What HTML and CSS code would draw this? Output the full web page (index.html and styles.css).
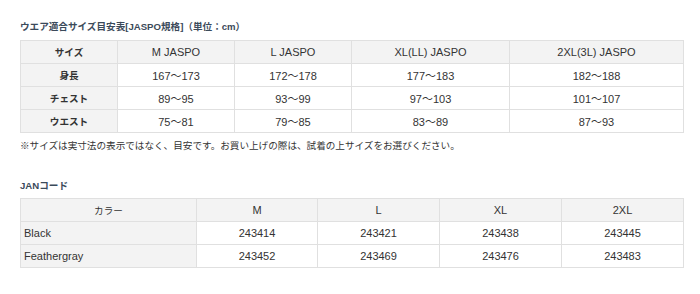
FILE: index.html
```html
<!DOCTYPE html>
<html lang="ja">
<head>
<meta charset="utf-8">
<link rel="stylesheet" href="styles.css">
</head>
<body>
<div class="wrap">
  <h2 class="title">ウエア適合サイズ目安表[JASPO規格]（単位：cm）</h2>
  <table class="tbl size">
    <colgroup>
      <col style="width:97px"><col style="width:117px"><col style="width:117px"><col style="width:158px"><col style="width:174px">
    </colgroup>
    <tr><th class="ja bold">サイズ</th><th>M JASPO</th><th>L JASPO</th><th>XL(LL) JASPO</th><th>2XL(3L) JASPO</th></tr>
    <tr><th class="ja bold">身長</th><td>167～173</td><td>172～178</td><td>177～183</td><td>182～188</td></tr>
    <tr><th class="ja bold">チェスト</th><td>89～95</td><td>93～99</td><td>97～103</td><td>101～107</td></tr>
    <tr><th class="ja bold">ウエスト</th><td>75～81</td><td>79～85</td><td>83～89</td><td>87～93</td></tr>
  </table>
  <p class="note">※サイズは実寸法の表示ではなく、目安です。お買い上げの際は、試着の上サイズをお選びください。</p>

  <h2 class="title jan">JANコード</h2>
  <table class="tbl jan-tbl">
    <colgroup>
      <col style="width:176px"><col style="width:121px"><col style="width:122px"><col style="width:122px"><col style="width:122px">
    </colgroup>
    <tr><th class="ja">カラー</th><th>M</th><th>L</th><th>XL</th><th>2XL</th></tr>
    <tr><th class="left">Black</th><td>243414</td><td>243421</td><td>243438</td><td>243445</td></tr>
    <tr><th class="left">Feathergray</th><td>243452</td><td>243469</td><td>243476</td><td>243483</td></tr>
  </table>
</div>
</body>
</html>
```

FILE: styles.css
```css
html, body {
  margin: 0;
  padding: 0;
  background: #fff;
}
body {
  font-family: "Liberation Sans", "Noto Sans CJK JP", sans-serif;
  color: #333;
}
.wrap {
  padding: 20px 0 0 20px;
  width: 663px;
}
.title {
  margin: 0 0 6px 0;
  font-size: 9.6px;
  line-height: 14px;
  font-weight: bold;
  color: #3b4a5a;
}
.title.jan {
  margin-bottom: 5px;
}
.tbl {
  width: 663px;
  border-collapse: collapse;
  table-layout: fixed;
}
.tbl th, .tbl td {
  border: 1px solid #e0e0e0;
  height: 22px;
  padding: 0;
  text-align: center;
  font-size: 11px;
  font-weight: normal;
  color: #333;
}
.tbl th {
  background: #f3f3f3;
}
.tbl tr:first-child th {
  background: #f3f3f3;
}
.tbl .ja {
  font-size: 9.6px;
}
.tbl .bold {
  font-weight: bold;
}
.tbl .left {
  text-align: left;
  padding-left: 3px;
}
.note {
  margin: 6px 0 26px 0;
  font-size: 9.6px;
  line-height: 14px;
  color: #333;
}
```
